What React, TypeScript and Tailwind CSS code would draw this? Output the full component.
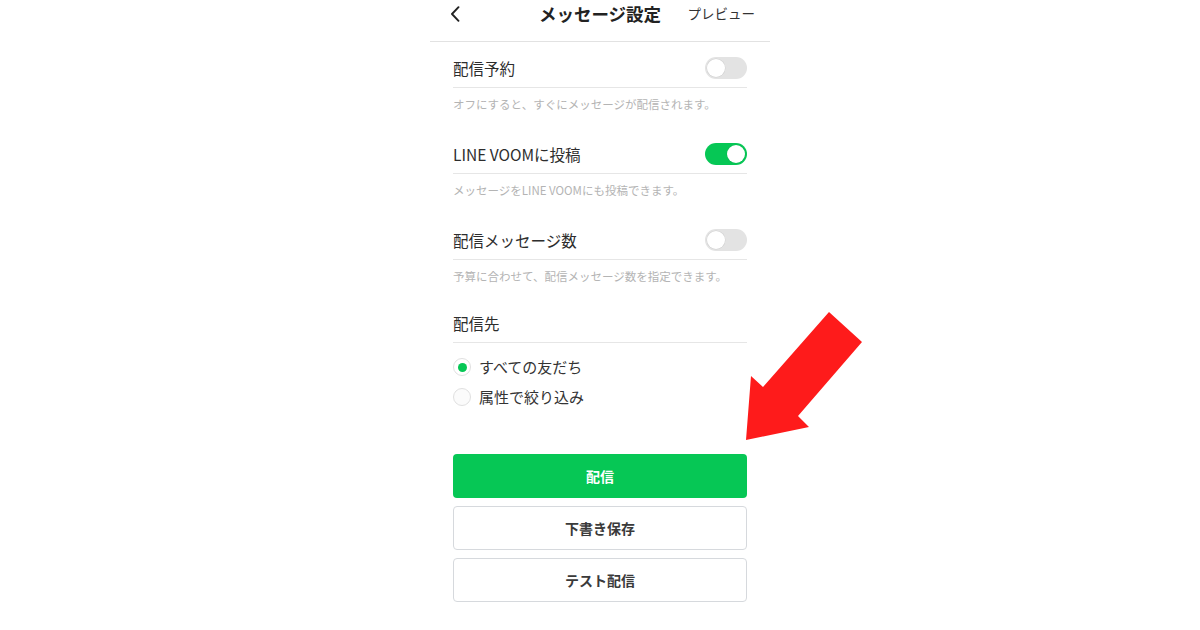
const FONT = { fontFamily: '"Noto Sans CJK JP", "Noto Sans", sans-serif' };

function Toggle({ on }: { on: boolean }) {
  return (
    <div
      className={`flex h-[22px] w-[42px] items-center rounded-full px-[2px] ${
        on ? "justify-end bg-[#06c755]" : "justify-start bg-[#e3e3e3]"
      }`}
    >
      <div className="h-[18px] w-[18px] rounded-full bg-white shadow-[0_0_0_0.5px_rgba(0,0,0,0.08)]" />
    </div>
  );
}

function SettingRow({
  label,
  hint,
  on,
  className = "",
}: {
  label: string;
  hint: string;
  on: boolean;
  className?: string;
}) {
  return (
    <div className={className}>
      <div className="flex h-[39px] items-center justify-between border-b border-[#e6e6e6] pb-[1px]">
        <span className="text-[15.5px] leading-[24px] text-[#2d2d2d]">{label}</span>
        <Toggle on={on} />
      </div>
      <p className="mt-[8px] text-[11.5px] leading-[16px] text-[#b4b4b4]">{hint}</p>
    </div>
  );
}

function Radio({ label, checked }: { label: string; checked: boolean }) {
  return (
    <div className="flex h-[30px] items-center gap-[8px]">
      <div
        className={`flex h-[18px] w-[18px] items-center justify-center rounded-full border border-[#e0e0e0] ${
          checked ? "bg-white" : "bg-[#fbfbfb]"
        }`}
      >
        {checked && <div className="h-[9px] w-[9px] rounded-full bg-[#06c755]" />}
      </div>
      <span className="text-[15px] leading-[22px] text-[#333333]">{label}</span>
    </div>
  );
}

export default function App() {
  return (
    <div className="relative h-[630px] w-[1200px] overflow-hidden bg-white" style={FONT}>
      <div className="mx-auto w-[340px]">
        {/* header */}
        <div className="grid h-[42px] grid-cols-[1fr_auto_1fr] items-start border-b border-[#e2e2e2]">
          <div className="pl-[20px] pt-[6px]">
            <svg width="10" height="16" viewBox="0 0 10 16" fill="none">
              <path d="M8.5 1.2 L2 8 L8.5 14.8" stroke="#222" strokeWidth="1.9" strokeLinecap="round" strokeLinejoin="round" />
            </svg>
          </div>
          <div className="text-[17.5px] font-bold leading-[27px] text-[#222]">メッセージ設定</div>
          <div className="flex justify-end pr-[15px] text-[13.5px] leading-[27px] text-[#333]">プレビュー</div>
        </div>

        <div className="px-[23px]">
          <SettingRow className="pt-[7px]" label="配信予約" hint="オフにすると、すぐにメッセージが配信されます。" on={false} />
          <SettingRow className="mt-[23px]" label="LINE VOOMに投稿" hint="メッセージをLINE VOOMにも投稿できます。" on />
          <SettingRow className="mt-[23px]" label="配信メッセージ数" hint="予算に合わせて、配信メッセージ数を指定できます。" on={false} />

          <div className="mt-[20px] flex h-[39px] items-center border-b border-[#e6e6e6] pb-[1px]">
            <span className="text-[15.5px] leading-[24px] text-[#2d2d2d]">配信先</span>
          </div>
          <div className="mt-[9px]">
            <Radio label="すべての友だち" checked />
            <Radio label="属性で絞り込み" checked={false} />
          </div>

          <div className="mt-[42px] flex flex-col gap-[8px]">
            <button className="h-[44px] rounded-[4px] bg-[#06c755] text-[14px] font-bold text-white">配信</button>
            <button className="h-[44px] rounded-[4px] border border-[#d6d9dd] bg-white text-[14px] font-semibold text-[#3a3a3a]">
              下書き保存
            </button>
            <button className="h-[44px] rounded-[4px] border border-[#d6d9dd] bg-white text-[14px] font-semibold text-[#3a3a3a]">
              テスト配信
            </button>
          </div>
        </div>
      </div>

      {/* red annotation arrow */}
      <svg className="pointer-events-none absolute left-0 top-0" width="1200" height="630">
        <polygon
          points="746,440 751,376 763,387 829,312 862,342 798,416 809,427"
          fill="#fe1b1b"
        />
      </svg>
    </div>
  );
}
